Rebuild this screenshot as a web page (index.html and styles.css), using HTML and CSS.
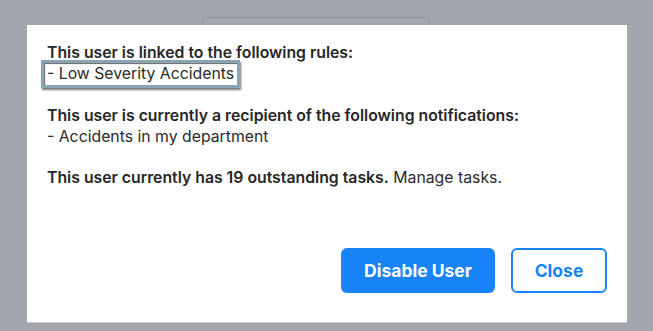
FILE: index.html
```html
<!DOCTYPE html>
<html>
<head>
<meta charset="utf-8">
<link rel="stylesheet" href="styles.css">
</head>
<body>
<div class="backdrop">
  <div class="behind"></div>
  <div class="modal">
    <div class="content">
      <p class="line"><b>This user is linked to the following rules:</b></p>
      <p class="line"><span class="highlight">- Low Severity Accidents</span></p>
      <p class="line blank"></p>
      <p class="line"><b>This user is currently a recipient of the following notifications:</b></p>
      <p class="line">- Accidents in my department</p>
      <p class="line blank"></p>
      <p class="line"><b>This user currently has 19 outstanding tasks.</b> Manage tasks.</p>
    </div>
    <div class="actions">
      <button class="btn primary">Disable User</button>
      <button class="btn outline">Close</button>
    </div>
  </div>
</div>
</body>
</html>
```
FILE: styles.css
```css
html, body {
  margin: 0;
  padding: 0;
}
body {
  width: 653px;
  height: 331px;
  background: #a3a7ad;
  font-family: "Inter", "DejaVu Sans", sans-serif;
  overflow: hidden;
}
.backdrop {
  position: relative;
  width: 653px;
  height: 331px;
  padding: 25px 0 0 27px;
  box-sizing: border-box;
}
.behind {
  position: absolute;
  left: 202px;
  top: 17px;
  width: 228px;
  height: 20px;
  border: 1px solid #8d9198;
  border-radius: 4px;
  box-sizing: border-box;
}
.modal {
  position: relative;
  width: 600px;
  height: 297px;
  background: #fff;
  box-shadow: 0 1px 0 #c9cbce;
  display: flex;
  flex-direction: column;
  box-sizing: border-box;
  padding: 17px 20px 29px 20px;
}
.content {
  flex: 1;
  color: #2b2b2b;
  font-size: 15.8px;
  line-height: 21px;
}
.line {
  margin: 0;
  height: 21px;
  white-space: nowrap;
}
.line:nth-child(n+4) {
  height: 20.6px;
}
.line b {
  font-weight: 600;
  color: #262626;
}
.highlight {
  margin-left: -6px;
  padding: 1px 3px 2px 3px;
  border: 3px solid #8ba4b1;
  box-shadow: 1px 2px 2px rgba(0,0,0,0.55), inset 1px 1px 1px rgba(0,0,0,0.6);
}
.actions {
  display: flex;
  justify-content: flex-end;
  gap: 16px;
}
.btn {
  height: 45px;
  border-radius: 6px;
  font-family: "Inter", "DejaVu Sans", sans-serif;
  font-size: 17.5px;
  font-weight: 700;
  box-sizing: border-box;
  cursor: pointer;
}
.primary {
  width: 154px;
  background: #1884f7;
  color: #fff;
  border: none;
}
.outline {
  width: 96px;
  background: #fff;
  color: #1884f7;
  border: 2px solid #1884f7;
}
```
